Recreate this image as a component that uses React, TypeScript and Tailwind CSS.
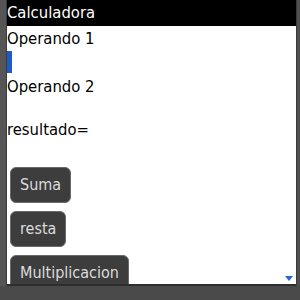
export default function App() {
  const font = "font-['DejaVu_Sans_Condensed','DejaVu_Sans',sans-serif]"

  return (
    <div className={`w-[300px] h-[300px] bg-[#4a4a4a] flex flex-col ${font}`}>
      <div className="flex flex-1 min-h-0">
        {/* left frame */}
        <div className="w-[7px] bg-[#555555] border-r border-[#3a3a3a]" />

        {/* screen */}
        <div className="w-[289px] bg-white flex flex-col relative overflow-hidden border-b-2 border-[#2e2e2e]">
          <div className="h-[27px] bg-black text-white text-[16.5px] leading-[26px]">Calculadora</div>

          <div className="flex flex-col text-black text-[16.5px]">
            <div className="leading-[23px] mt-[1px]">Operando 1</div>
            <div className="h-[22px] w-[5px] bg-[#1f5bc4] mt-px" />
            <div className="leading-[23px] mt-[2px]">Operando 2</div>
            <div className="leading-[23px] mt-[20px]">resultado=</div>
          </div>

          <div className="flex flex-col items-start gap-[8px] pl-[3px] mt-[26px]">
            {['Suma', 'resta', 'Multiplicacion'].map((label) => (
              <button
                key={label}
                className="h-[36px] px-[9px] rounded-[6px] bg-[#3d3d3d] border border-[#6a6a6a] text-[#dcdcdc] text-[16px] leading-none shrink-0"
              >
                {label}
              </button>
            ))}
          </div>

          {/* scroll indicator */}
          <svg className="absolute right-[3px] bottom-[3px]" width="8" height="5" viewBox="0 0 8 5">
            <path d="M0 0 H8 L4 5 Z" fill="#2a63d6" />
          </svg>
        </div>

        {/* right frame */}
        <div className="flex-1 bg-[#505050] border-l border-[#3a3a3a]" />
      </div>

      {/* bottom frame */}
      <div className="h-[14px] bg-[#4a4a4a]" />
    </div>
  )
}
